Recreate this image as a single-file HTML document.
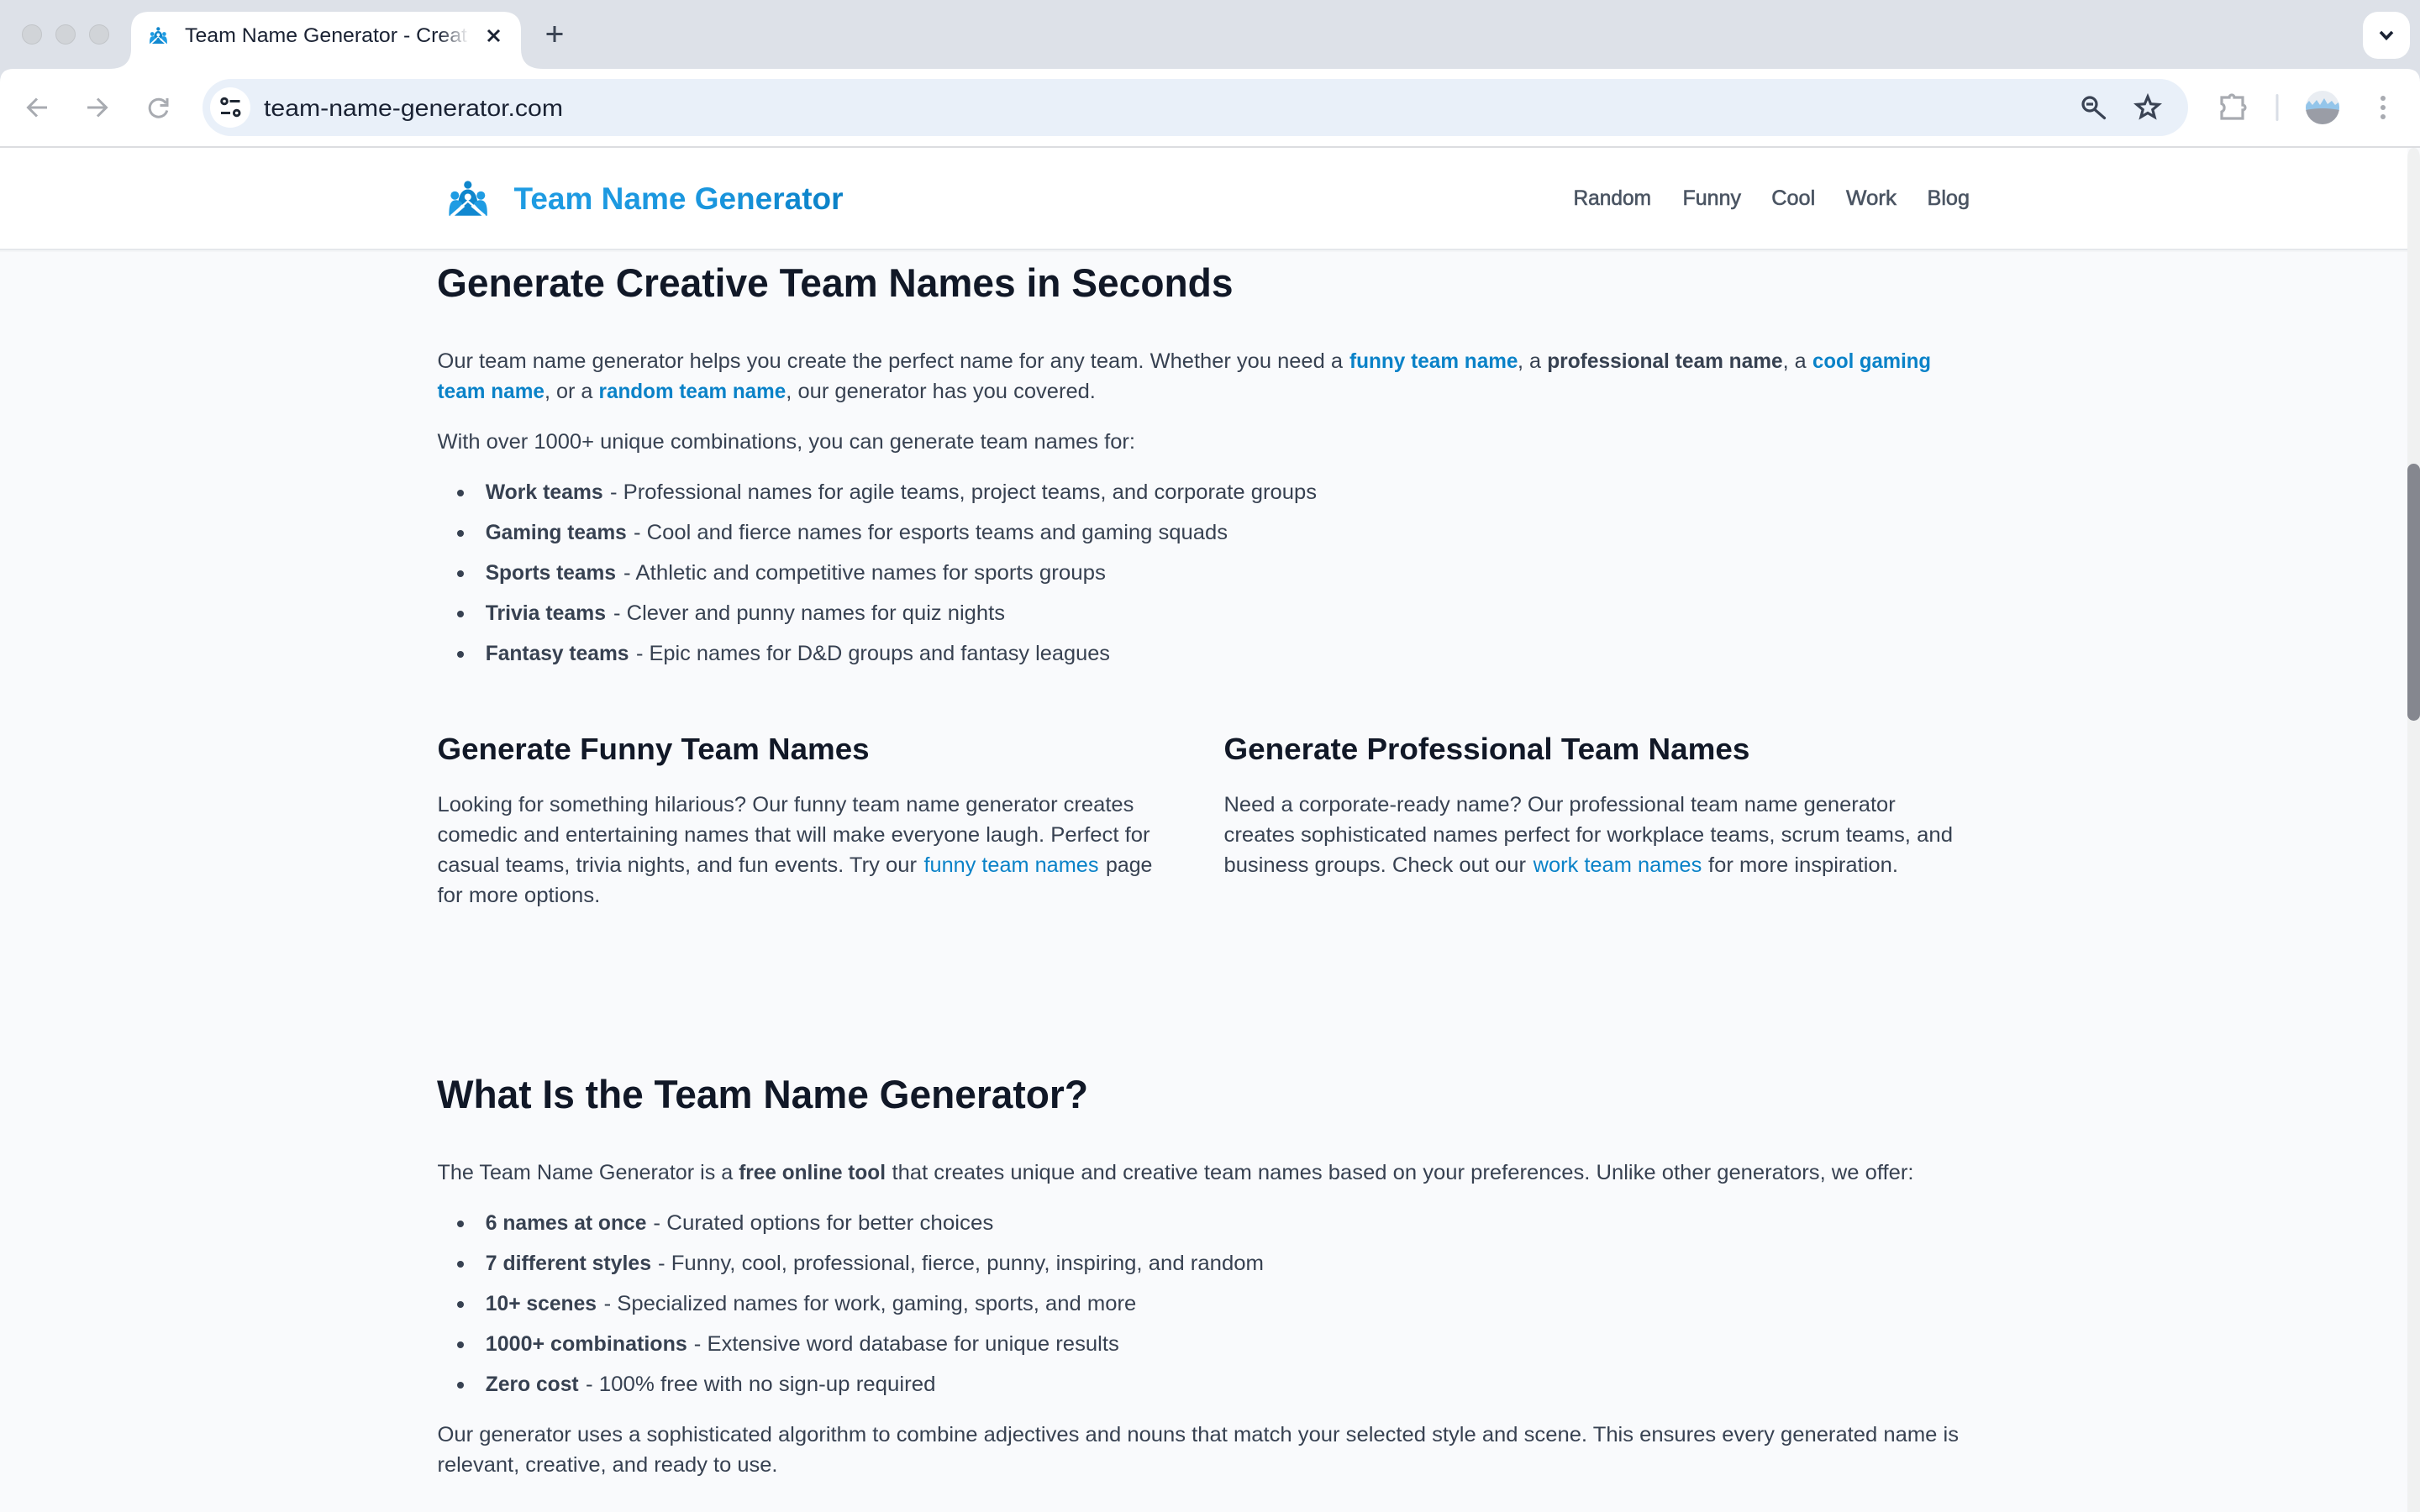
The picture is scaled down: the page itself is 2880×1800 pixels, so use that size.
<!DOCTYPE html>
<html lang="en"><head><meta charset="utf-8"><title>Team Name Generator</title>
<style>
html,body{margin:0;padding:0;width:2880px;height:1800px;overflow:hidden;background:#f9fafc}
svg{display:block}
text{font-family:"Liberation Sans",Arial,sans-serif;white-space:pre}
.r{font-size:25px;fill:#374151}
.b{font-size:25px;fill:#374151;font-weight:700}
.l{font-size:25px;fill:#0a82c8}
.lb{font-size:25px;fill:#0a82c8;font-weight:700}
.h2{font-size:47px;font-weight:700;fill:#111827}
.h3{font-size:36px;font-weight:700;fill:#111827}
.n{font-size:25px;fill:#4b5563;stroke:#4b5563;stroke-width:.6}
</style></head><body>
<svg xmlns="http://www.w3.org/2000/svg" width="2880" height="1800" viewBox="0 0 2880 1800">
<defs>
<linearGradient id="lg" gradientUnits="userSpaceOnUse" x1="612" y1="0" x2="1004" y2="0"><stop offset="0" stop-color="#1f9ce3"/><stop offset=".6" stop-color="#1a96de"/><stop offset="1" stop-color="#0a80c6"/></linearGradient>
<linearGradient id="fade" x1="0" x2="1" y1="0" y2="0"><stop offset="0" stop-color="#fff" stop-opacity="0"/><stop offset="1" stop-color="#fff"/></linearGradient>
<clipPath id="av"><circle cx="2764" cy="128" r="20"/></clipPath>
<g id="logo">
<circle cx="22.4" cy="5" r="4.6" fill="#0f86cc"/>
<circle cx="6.9" cy="17.7" r="5" fill="#1f9ce3"/>
<circle cx="37.9" cy="17.7" r="5" fill="#1f9ce3"/>
<path d="M11 26 C12 15 17 10.5 22.4 10.5 C27.8 10.5 32.8 15 33.8 26 L22.4 33Z" fill="#0f86cc"/>
<circle cx="22.4" cy="19.5" r="4" fill="#fff"/>
<path d="M0 41.7 C-.2 31 1 23.5 8 23.3 C11 23.3 14 24.5 16 27.5 L3 41.7Z" fill="#1f9ce3"/>
<path d="M45.4 41.7 C45.6 31 44.4 23.5 37.4 23.3 C34.4 23.3 31.4 24.5 29.4 27.5 L42.4 41.7Z" fill="#1f9ce3"/>
<path d="M6.5 41.7 L22.4 28 L39 41.7Z" fill="#1188d0"/>
<path d="M2.2 42 L22.4 24.5 L43 42" fill="none" stroke="#fff" stroke-width="2.4"/>
</g>
</defs>

<rect width="2880" height="1800" fill="#f9fafc"/>

<!-- browser chrome -->
<rect width="2880" height="176" fill="#dde1e8"/>
<path d="M0 98 Q0 82 16 82 H2864 Q2880 82 2880 98 V176 H0Z" fill="#fff"/>
<path d="M130 82 Q156 82 156 58 V36 Q156 14 178 14 H598 Q620 14 620 36 V58 Q620 82 646 82Z" fill="#fff"/>
<g fill="#d1d4d8" stroke="#c2c5c9" stroke-width="1"><circle cx="38" cy="41" r="11.5"/><circle cx="78" cy="41" r="11.5"/><circle cx="118" cy="41" r="11.5"/></g>
<use href="#logo" transform="translate(178 32) scale(.46 .48)"/>
<text x="220" y="50" font-size="24" fill="#1a2233" textLength="336" lengthAdjust="spacingAndGlyphs">Team Name Generator - Creat</text>
<rect x="522" y="24" width="36" height="36" fill="url(#fade)"/>
<path d="M581 36 L594 49 M594 36 L581 49" stroke="#1a2233" stroke-width="3" fill="none"/>
<path d="M660 31 V50 M650.5 40.5 H669.5" stroke="#3c4555" stroke-width="3" fill="none"/>

<rect x="2812" y="14" width="56" height="56" rx="18" fill="#fff"/>
<path d="M2833 38 L2840 45.5 L2847 38" stroke="#1a2233" stroke-width="3.6" fill="none"/>

<g stroke="#a8abb1" stroke-width="3" fill="none">
<path d="M56 128 H34 M44 117.5 L33.5 128 L44 138.5"/>
<path d="M104 128 H126 M116 117.5 L126.5 128 L116 138.5"/>
<path d="M197.5 123 A 10.5 10.5 0 1 0 198.8 131.5"/>
<path d="M199 117 V125.5 H190.5"/>
</g>
<rect x="241" y="94" width="2363" height="68" rx="34" fill="#e9f0f9"/>
<circle cx="274" cy="128" r="24" fill="#fff"/>
<g stroke="#1f2733" stroke-width="3" fill="none">
<circle cx="267" cy="120.5" r="3.3"/><path d="M273.5 120.5 H285.5"/>
<path d="M263 134.5 H274"/><circle cx="281.7" cy="134.5" r="3.3"/>
</g>
<text x="314" y="138" font-size="28" fill="#1a2233" textLength="356" lengthAdjust="spacingAndGlyphs">team-name-generator.com</text>

<g stroke="#3a4354" stroke-width="3.2" fill="none">
<circle cx="2487" cy="124" r="8"/>
<path d="M2483 124 H2491"/>
<path d="M2493 130.5 L2504.5 140.5" stroke-linecap="round"/>
<path d="M2556 115 L2559.6 123.7 L2569 124.4 L2561.8 130.5 L2564.1 139.3 L2556 134.5 L2547.9 139.3 L2550.2 130.5 L2543 124.4 L2552.4 123.7Z" stroke-linejoin="miter"/>
</g>
<path d="M2644 116 H2653 A3 3 0 0 1 2659 116 H2669 V125 A3 3 0 0 1 2669 131 V141 H2644 V133 A5.2 5.2 0 0 0 2644 123.5Z" fill="none" stroke="#a8abb1" stroke-width="3.2"/>
<rect x="2708.5" y="112" width="3" height="32" rx="1.5" fill="#d9dee6"/>
<g clip-path="url(#av)">
<rect x="2744" y="108" width="40" height="40" fill="#e9edf2"/>
<path d="M2744 130 V125 L2748 120 L2752 125 L2757 119 L2761 125 L2766 117 L2770 124 L2775 120 L2779 125 L2784 121 V132 H2744Z" fill="#93c5ea"/>
<path d="M2744 131 Q2764 127 2784 131 V148 H2744Z" fill="#9a9da6"/>
</g>
<g fill="#a8abb1"><circle cx="2836" cy="117" r="3"/><circle cx="2836" cy="128" r="3"/><circle cx="2836" cy="139" r="3"/></g>
<rect y="174" width="2880" height="2" fill="#dcdde0"/>

<!-- site nav -->
<rect y="176" width="2865" height="120" fill="#fff"/>
<rect y="296" width="2865" height="2" fill="#e5e7eb"/>
<rect y="298" width="2865" height="2" fill="#f4f5f7"/>
<use href="#logo" transform="translate(534.4 215)"/>
<text x="611.5" y="249" font-size="37" font-weight="700" fill="url(#lg)" textLength="392" lengthAdjust="spacingAndGlyphs">Team Name Generator</text>
<text class="n" x="1872.5" y="244" textLength="92.5" lengthAdjust="spacingAndGlyphs">Random</text>
<text class="n" x="2002.5" y="244" textLength="69.5" lengthAdjust="spacingAndGlyphs">Funny</text>
<text class="n" x="2108.2" y="244" textLength="52" lengthAdjust="spacingAndGlyphs">Cool</text>
<text class="n" x="2197" y="244" textLength="60" lengthAdjust="spacingAndGlyphs">Work</text>
<text class="n" x="2293.5" y="244" textLength="50.5" lengthAdjust="spacingAndGlyphs">Blog</text>

<!-- scrollbar -->
<path d="M2865 190 Q2865 176 2872.5 176 Q2880 176 2880 190 V1800 H2865Z" fill="#f0f1f1"/>
<rect x="2865" y="552" width="15" height="306" rx="7.5" fill="#85878f"/>

<!-- content -->
<text class="h2" x="520" y="353" textLength="947.5" lengthAdjust="spacingAndGlyphs">Generate Creative Team Names in Seconds</text>

<text class="r" x="520.5" y="438" textLength="1077.5" lengthAdjust="spacingAndGlyphs">Our team name generator helps you create the perfect name for any team. Whether you need a</text>
<text class="lb" x="1606" y="438" textLength="200.5" lengthAdjust="spacingAndGlyphs">funny team name</text>
<text class="r" x="1806" y="438" textLength="28" lengthAdjust="spacingAndGlyphs">, a</text>
<text class="b" x="1841.2" y="438" textLength="280.5" lengthAdjust="spacingAndGlyphs">professional team name</text>
<text class="r" x="2121.6" y="438" textLength="28" lengthAdjust="spacingAndGlyphs">, a</text>
<text class="lb" x="2157" y="438" textLength="141" lengthAdjust="spacingAndGlyphs">cool gaming</text>

<text class="lb" x="520.5" y="474" textLength="127.5" lengthAdjust="spacingAndGlyphs">team name</text>
<text class="r" x="648" y="474" textLength="57.4" lengthAdjust="spacingAndGlyphs">, or a</text>
<text class="lb" x="712.5" y="474" textLength="222.8" lengthAdjust="spacingAndGlyphs">random team name</text>
<text class="r" x="935.3" y="474" textLength="368.6" lengthAdjust="spacingAndGlyphs">, our generator has you covered.</text>

<text class="r" x="520.5" y="534" textLength="830.5" lengthAdjust="spacingAndGlyphs">With over 1000+ unique combinations, you can generate team names for:</text>

<g fill="#374151">
<circle cx="548" cy="587" r="4"/><circle cx="548" cy="635" r="4"/><circle cx="548" cy="683" r="4"/><circle cx="548" cy="731" r="4"/><circle cx="548" cy="779" r="4"/>
<circle cx="548" cy="1457" r="4"/><circle cx="548" cy="1505" r="4"/><circle cx="548" cy="1553" r="4"/><circle cx="548" cy="1601" r="4"/><circle cx="548" cy="1649" r="4"/>
</g>

<text class="b" x="577.7" y="594" textLength="140" lengthAdjust="spacingAndGlyphs">Work teams</text>
<text class="r" x="726" y="594" textLength="841" lengthAdjust="spacingAndGlyphs">- Professional names for agile teams, project teams, and corporate groups</text>
<text class="b" x="577.7" y="642" textLength="168" lengthAdjust="spacingAndGlyphs">Gaming teams</text>
<text class="r" x="754" y="642" textLength="707" lengthAdjust="spacingAndGlyphs">- Cool and fierce names for esports teams and gaming squads</text>
<text class="b" x="577.7" y="690" textLength="155.3" lengthAdjust="spacingAndGlyphs">Sports teams</text>
<text class="r" x="742" y="690" textLength="574" lengthAdjust="spacingAndGlyphs">- Athletic and competitive names for sports groups</text>
<text class="b" x="577.7" y="738" textLength="143.3" lengthAdjust="spacingAndGlyphs">Trivia teams</text>
<text class="r" x="730" y="738" textLength="466" lengthAdjust="spacingAndGlyphs">- Clever and punny names for quiz nights</text>
<text class="b" x="577.7" y="786" textLength="170.8" lengthAdjust="spacingAndGlyphs">Fantasy teams</text>
<text class="r" x="757" y="786" textLength="564" lengthAdjust="spacingAndGlyphs">- Epic names for D&amp;D groups and fantasy leagues</text>

<text class="h3" x="520.5" y="904" textLength="514.1" lengthAdjust="spacingAndGlyphs">Generate Funny Team Names</text>
<text class="r" x="520.5" y="966" textLength="828.9" lengthAdjust="spacingAndGlyphs">Looking for something hilarious? Our funny team name generator creates</text>
<text class="r" x="520.5" y="1002" textLength="848" lengthAdjust="spacingAndGlyphs">comedic and entertaining names that will make everyone laugh. Perfect for</text>
<text class="r" x="520.5" y="1038" textLength="570.5" lengthAdjust="spacingAndGlyphs">casual teams, trivia nights, and fun events. Try our</text>
<text class="l" x="1099.5" y="1038" textLength="208" lengthAdjust="spacingAndGlyphs">funny team names</text>
<text class="r" x="1316" y="1038" textLength="55.4" lengthAdjust="spacingAndGlyphs">page</text>
<text class="r" x="520.5" y="1074" textLength="193.8" lengthAdjust="spacingAndGlyphs">for more options.</text>

<text class="h3" x="1456.5" y="904" textLength="625.9" lengthAdjust="spacingAndGlyphs">Generate Professional Team Names</text>
<text class="r" x="1456.5" y="966" textLength="799.2" lengthAdjust="spacingAndGlyphs">Need a corporate-ready name? Our professional team name generator</text>
<text class="r" x="1456.5" y="1002" textLength="867.5" lengthAdjust="spacingAndGlyphs">creates sophisticated names perfect for workplace teams, scrum teams, and</text>
<text class="r" x="1456.5" y="1038" textLength="359.5" lengthAdjust="spacingAndGlyphs">business groups. Check out our</text>
<text class="l" x="1824.6" y="1038" textLength="200.7" lengthAdjust="spacingAndGlyphs">work team names</text>
<text class="r" x="2033" y="1038" textLength="226" lengthAdjust="spacingAndGlyphs">for more inspiration.</text>

<text class="h2" x="520" y="1319" textLength="775" lengthAdjust="spacingAndGlyphs">What Is the Team Name Generator?</text>

<text class="r" x="520.5" y="1404" textLength="351.8" lengthAdjust="spacingAndGlyphs">The Team Name Generator is a</text>
<text class="b" x="879.2" y="1404" textLength="174.8" lengthAdjust="spacingAndGlyphs">free online tool</text>
<text class="r" x="1061.5" y="1404" textLength="1216" lengthAdjust="spacingAndGlyphs">that creates unique and creative team names based on your preferences. Unlike other generators, we offer:</text>

<text class="b" x="577.8" y="1464" textLength="191.6" lengthAdjust="spacingAndGlyphs">6 names at once</text>
<text class="r" x="777.4" y="1464" textLength="405" lengthAdjust="spacingAndGlyphs">- Curated options for better choices</text>
<text class="b" x="577.8" y="1512" textLength="197.2" lengthAdjust="spacingAndGlyphs">7 different styles</text>
<text class="r" x="783" y="1512" textLength="721" lengthAdjust="spacingAndGlyphs">- Funny, cool, professional, fierce, punny, inspiring, and random</text>
<text class="b" x="577.8" y="1560" textLength="132.2" lengthAdjust="spacingAndGlyphs">10+ scenes</text>
<text class="r" x="718.6" y="1560" textLength="633.7" lengthAdjust="spacingAndGlyphs">- Specialized names for work, gaming, sports, and more</text>
<text class="b" x="577.8" y="1608" textLength="240" lengthAdjust="spacingAndGlyphs">1000+ combinations</text>
<text class="r" x="825.8" y="1608" textLength="506" lengthAdjust="spacingAndGlyphs">- Extensive word database for unique results</text>
<text class="b" x="577.8" y="1656" textLength="110.8" lengthAdjust="spacingAndGlyphs">Zero cost</text>
<text class="r" x="697" y="1656" textLength="416.5" lengthAdjust="spacingAndGlyphs">- 100% free with no sign-up required</text>

<text class="r" x="520.5" y="1716" textLength="1810.5" lengthAdjust="spacingAndGlyphs">Our generator uses a sophisticated algorithm to combine adjectives and nouns that match your selected style and scene. This ensures every generated name is</text>
<text class="r" x="520.5" y="1752" textLength="405" lengthAdjust="spacingAndGlyphs">relevant, creative, and ready to use.</text>
</svg>
</body></html>
